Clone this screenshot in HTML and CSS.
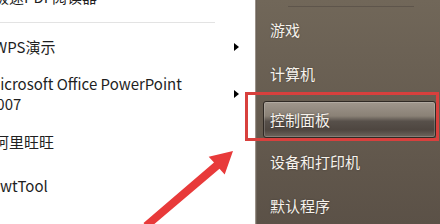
FILE: index.html
```html
<!DOCTYPE html>
<html>
<head>
<meta charset="utf-8">
<link rel="stylesheet" href="styles.css">
</head>
<body>
<div class="menu">
  <div class="left">
    <div class="item item-top"><span class="label">极速PDF阅读器</span></div>
    <div class="sep"></div>
    <div class="item"><span class="label shift">WPS演示</span><span class="tri"></span></div>
    <div class="item item-two"><span class="label far">Microsoft Office PowerPoint<br>2007</span><span class="tri"></span></div>
    <div class="item"><span class="label shift">阿里旺旺</span></div>
    <div class="item item-gap"><span class="label none">wtTool</span></div>
  </div>
  <div class="right">
    <div class="rsep"></div>
    <div class="ritem">游戏</div>
    <div class="ritem">计算机</div>
    <div class="ritem ritem-hl"><div class="btn">控制面板</div></div>
    <div class="ritem">设备和打印机</div>
    <div class="ritem">默认程序</div>
  </div>
  <div class="redbox"></div>
  <svg class="arrow" width="440" height="224" viewBox="0 0 440 224">
    <polygon points="233,151 224.7,174.6 219.5,168.8 148.5,229 143.5,223 214,162.6 208.7,156.8" fill="#e83a3a"/>
  </svg>
</div>
</body>
</html>
```
FILE: styles.css
```css
html, body {
  margin: 0;
  padding: 0;
  background: #ffffff;
  overflow: hidden;
}
.menu {
  position: relative;
  width: 440px;
  height: 224px;
  display: flex;
  overflow: hidden;
  font-family: "Noto Sans CJK SC", "Noto Sans", sans-serif;
  font-size: 15px;
}
.left {
  width: 255px;
  flex: none;
  display: flex;
  flex-direction: column;
  background: #ffffff;
  color: #1f1f1f;
}
.item {
  position: relative;
  display: flex;
  align-items: center;
  padding: 8px 16px 8px 0;
  line-height: 20px;
  min-height: 20px;
}
.item-top {
  margin-top: -16px;
  padding: 0;
  height: 26px;
}
.item-two {
  padding-top: 9px;
  padding-bottom: 10px;
}
.item-gap {
  margin-top: 8px;
}
.label {
  flex: 1;
  white-space: nowrap;
  margin-left: -6px;
}
.label.far { margin-left: -12px; }
.label.none { margin-left: 0; }
.tri {
  width: 0;
  height: 0;
  border-top: 4.5px solid transparent;
  border-bottom: 4.5px solid transparent;
  border-left: 5px solid #000;
}
.sep {
  height: 1px;
  margin: 12px 40px 6px 0;
  background: #e3e3e3;
}
.right {
  flex: 1;
  display: flex;
  flex-direction: column;
  background: linear-gradient(#716759, #5b5147);
  border-left: 1px solid #9a9188;
  box-shadow: inset 1px 0 0 #6a6157;
  color: #f6f2ec;
}
.rsep {
  height: 1px;
  margin: 6px 26px 1px 32px;
  background: #8d8378;
  border-bottom: 1px solid #5e554b;
}
.ritem {
  height: 44px;
  line-height: 44px;
  padding-left: 14px;
  text-shadow: 0 0 2px rgba(0,0,0,0.35);
}
.ritem-hl {
  padding: 5px 4px 2px 7px;
  height: 37px;
  line-height: 35px;
}
.btn {
  height: 35px;
  padding-left: 6px;
  border: 1px solid #2f2924;
  border-radius: 3px;
  background: linear-gradient(#a0978d 0%, #8a8176 40%, #57504a 55%, #4e4640 80%, #6e665d 100%);
  box-shadow: inset 0 0 0 1px rgba(255,255,255,0.18);
}
.redbox {
  position: absolute;
  left: 245px;
  top: 92px;
  width: 188px;
  height: 43px;
  border: 3px solid #d8403d;
}
.arrow {
  position: absolute;
  left: 0;
  top: 0;
}
```
